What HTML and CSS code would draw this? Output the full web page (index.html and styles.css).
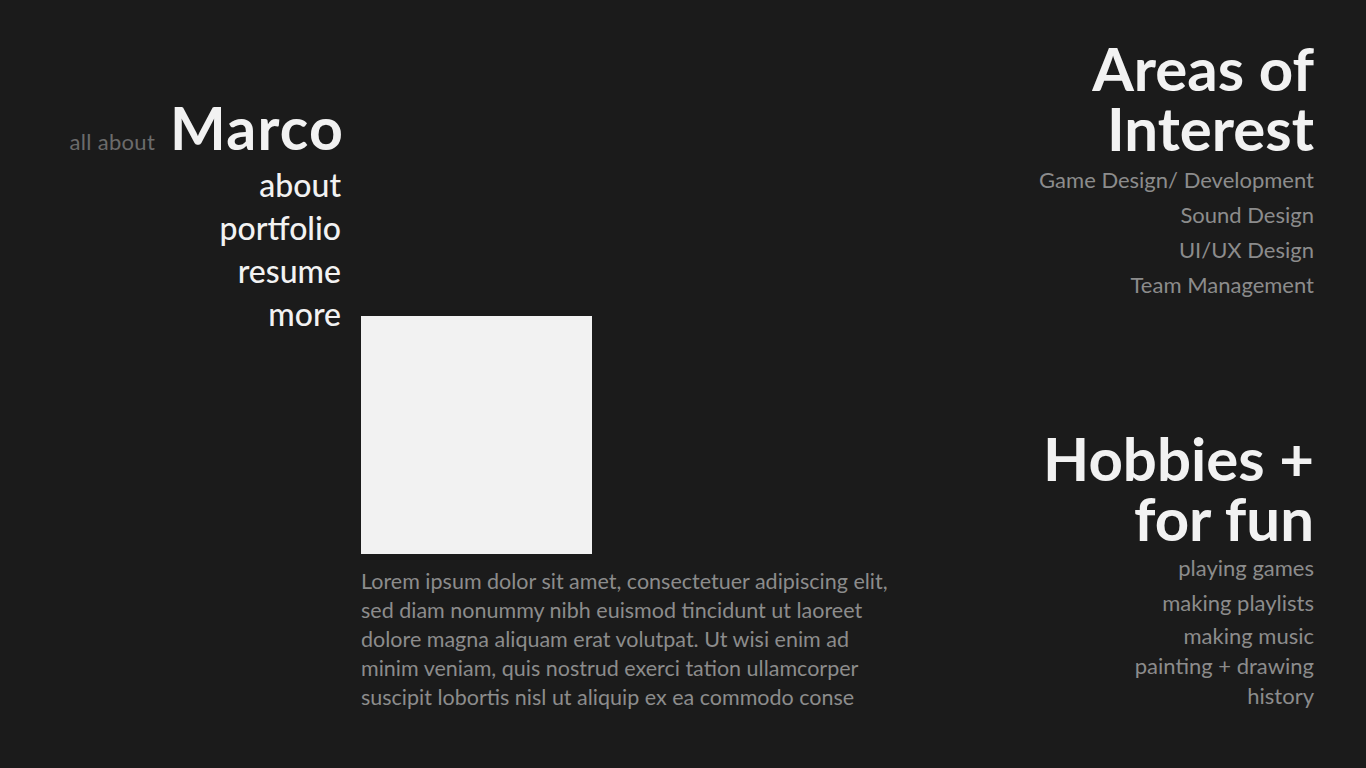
FILE: index.html
```html
<!DOCTYPE html>
<html lang="en">
<head>
<meta charset="utf-8">
<title>all about Marco</title>
<link rel="stylesheet" href="styles.css">
</head>
<body>
<div class="page">
  <header class="left">
    <div class="title-row">
      <span class="pre">all about</span>
      <h1 class="name">Marco</h1>
    </div>
    <nav class="nav">
      <a class="nav-item" href="#">about</a>
      <a class="nav-item" href="#">portfolio</a>
      <a class="nav-item" href="#">resume</a>
      <a class="nav-item" href="#">more</a>
    </nav>
  </header>
  <main class="center">
    <div class="photo"></div>
    <p class="bio">Lorem ipsum dolor sit amet, consectetuer adipiscing elit,<br>sed diam nonummy nibh euismod tincidunt ut laoreet<br>dolore magna aliquam erat volutpat. Ut wisi enim ad<br>minim veniam, quis nostrud exerci tation ullamcorper<br>suscipit lobortis nisl ut aliquip ex ea commodo conse</p>
  </main>
  <aside class="right">
    <section class="block interests">
      <h2 class="heading">Areas of<br>Interest</h2>
      <ul class="list">
        <li>Game Design/ Development</li>
        <li>Sound Design</li>
        <li>UI/UX Design</li>
        <li>Team Management</li>
      </ul>
    </section>
    <section class="block hobbies">
      <h2 class="heading">Hobbies +<br>for fun</h2>
      <ul class="list hobby-list">
        <li class="h1">playing games</li>
        <li class="h2">making playlists</li>
        <li class="h3">making music</li>
        <li class="h4">painting + drawing</li>
        <li class="h5">history</li>
      </ul>
    </section>
  </aside>
</div>
</body>
</html>
```

FILE: styles.css
```css
* { box-sizing: border-box; }
html, body {
  margin: 0;
  padding: 0;
  background: #1b1b1b;
}
body {
  font-family: "Lato", "Noto Sans", sans-serif;
  color: #f2f2f2;
  width: 1366px;
  height: 768px;
  overflow: hidden;
}
.page {
  display: flex;
  height: 768px;
}
.left {
  width: 343px;
  display: flex;
  flex-direction: column;
  align-items: flex-end;
  padding-top: 98px;
}
.title-row {
  display: flex;
  align-items: baseline;
  gap: 15px;
}
.pre {
  font-size: 22px;
  color: #6b6b6b;
  font-weight: 400;
  letter-spacing: 0.3px;
}
.name {
  margin: 0;
  font-size: 59px;
  font-weight: 700;
  line-height: 60px;
  letter-spacing: 1.2px;
  margin-right: -1px;
}
.nav {
  display: flex;
  flex-direction: column;
  align-items: flex-end;
  margin-top: 5px;
  padding-right: 2px;
}
.nav-item {
  color: #f2f2f2;
  text-decoration: none;
  font-size: 32px;
  line-height: 43px;
  font-weight: 500;
}
.center {
  margin-left: 18px;
  padding-top: 316px;
  flex: 1;
}
.photo {
  width: 231px;
  height: 238px;
  background: #f2f2f2;
}
.bio {
  margin: 13px 0 0;
  font-size: 21.5px;
  line-height: 29px;
  color: #8c8c8c;
  white-space: nowrap;
}
.right {
  width: 420px;
  padding-right: 52px;
  display: flex;
  flex-direction: column;
  align-items: flex-end;
  text-align: right;
  padding-top: 38px;
}
.heading {
  margin: 0;
  font-size: 60px;
  line-height: 60px;
  font-weight: 700;
  color: #f2f2f2;
}
.list {
  list-style: none;
  margin: 4px 0 0;
  padding: 0;
  color: #8c8c8c;
  font-size: 22px;
  line-height: 35px;
}
.hobbies {
  margin-top: 126px;
}
.hobby-list {
  margin-top: 2px;
}
.hobby-list .h1 { line-height: 35px; }
.hobby-list .h2 { line-height: 35px; }
.hobby-list .h3 { line-height: 31px; }
.hobby-list .h4 { line-height: 29px; }
.hobby-list .h5 { line-height: 31px; }
```
